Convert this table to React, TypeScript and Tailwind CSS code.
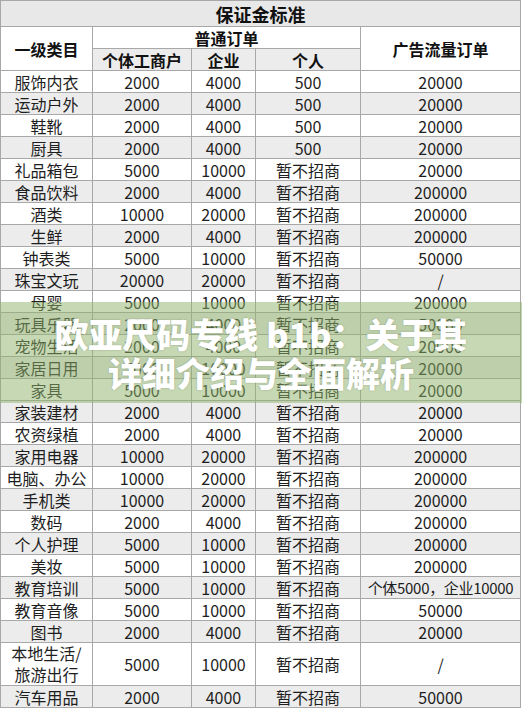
import React from "react";

type Row = [string, string, string, string, string];

const rows: Row[] = [
  ["服饰内衣", "2000", "4000", "500", "20000"],
  ["运动户外", "2000", "4000", "500", "20000"],
  ["鞋靴", "2000", "4000", "500", "20000"],
  ["厨具", "2000", "4000", "500", "20000"],
  ["礼品箱包", "5000", "10000", "暂不招商", "20000"],
  ["食品饮料", "2000", "4000", "暂不招商", "200000"],
  ["酒类", "10000", "20000", "暂不招商", "200000"],
  ["生鲜", "2000", "4000", "暂不招商", "200000"],
  ["钟表类", "5000", "10000", "暂不招商", "50000"],
  ["珠宝文玩", "20000", "20000", "暂不招商", "/"],
  ["母婴", "5000", "10000", "暂不招商", "200000"],
  ["玩具乐器", "2000", "4000", "暂不招商", "50000"],
  ["宠物生活", "2000", "4000", "暂不招商", "20000"],
  ["家居日用", "5000", "10000", "暂不招商", "20000"],
  ["家具", "5000", "10000", "暂不招商", "20000"],
  ["家装建材", "2000", "4000", "暂不招商", "20000"],
  ["农资绿植", "2000", "4000", "暂不招商", "20000"],
  ["家用电器", "10000", "20000", "暂不招商", "200000"],
  ["电脑、办公", "10000", "20000", "暂不招商", "200000"],
  ["手机类", "10000", "20000", "暂不招商", "200000"],
  ["数码", "2000", "4000", "暂不招商", "200000"],
  ["个人护理", "5000", "10000", "暂不招商", "200000"],
  ["美妆", "5000", "10000", "暂不招商", "200000"],
  ["教育培训", "5000", "10000", "暂不招商", "个体5000，企业10000"],
  ["教育音像", "5000", "10000", "暂不招商", "50000"],
  ["图书", "2000", "4000", "暂不招商", "20000"],
];

const cell = "border border-[#a8a8a8] p-0 text-center whitespace-nowrap";

const App = () => (
  <div className="relative w-[522px] h-[709px] overflow-hidden bg-white font-['Noto_Sans_CJK_SC',sans-serif] text-[16px] leading-[20px] text-[#1e1e1e]">
    <table className="w-[520px] table-fixed border-collapse">
      <colgroup>
        <col className="w-[92px]" />
        <col className="w-[99px]" />
        <col className="w-[64px]" />
        <col className="w-[105px]" />
        <col className="w-[160px]" />
      </colgroup>
      <thead>
        <tr className="h-[26px] bg-[#e8e8e8]">
          <th colSpan={5} className={`${cell} text-[18px] font-bold text-[#111]`}>保证金标准</th>
        </tr>
        <tr className="h-[22px]">
          <th rowSpan={2} className={`${cell} bg-white font-bold text-[#111]`}>一级类目</th>
          <th colSpan={3} className={`${cell} bg-white font-bold text-[#111]`}>普通订单</th>
          <th rowSpan={2} className={`${cell} bg-white font-bold text-[#111]`}>广告流量订单</th>
        </tr>
        <tr className="h-[22px] bg-[#ececec]">
          <th className={`${cell} font-bold text-[#111]`}>个体工商户</th>
          <th className={`${cell} font-bold text-[#111]`}>企业</th>
          <th className={`${cell} font-bold text-[#111]`}>个人</th>
        </tr>
      </thead>
      <tbody>
        {rows.map((r, i) => (
          <tr key={r[0]} className={`h-[22px] ${i % 2 === 1 ? "bg-[#ececec]" : "bg-white"}`}>
            {r.map((v, j) => (
              <td
                key={j}
                className={`${cell} ${v.length > 10 ? "text-[15px] tracking-[-0.3px]" : ""}`}
              >
                {v}
              </td>
            ))}
          </tr>
        ))}
        <tr className="h-[43px] bg-white">
          <td className={`${cell} leading-[21px]`}>
            本地生活/
            <br />
            旅游出行
          </td>
          <td className={cell}>5000</td>
          <td className={cell}>10000</td>
          <td className={cell}>暂不招商</td>
          <td className={cell}>/</td>
        </tr>
        <tr className="h-[22px] bg-[#ececec]">
          <td className={cell}>汽车用品</td>
          <td className={cell}>2000</td>
          <td className={cell}>4000</td>
          <td className={cell}>暂不招商</td>
          <td className={cell}>50000</td>
        </tr>
      </tbody>
    </table>

    {/* title banner over the table */}
    <div className="absolute left-0 top-[302px] flex h-[101px] w-full flex-col items-center justify-center bg-[#8fb36a]/50">
      <p className="text-[34px] font-black leading-[39px] text-white [text-shadow:0_0_2px_rgba(0,0,0,0.25)]">
        欧亚尺码专线 b1b：关于其
      </p>
      <p className="text-[34px] font-black leading-[39px] text-white [text-shadow:0_0_2px_rgba(0,0,0,0.25)]">
        详细介绍与全面解析
      </p>
    </div>
  </div>
);

export default App;
